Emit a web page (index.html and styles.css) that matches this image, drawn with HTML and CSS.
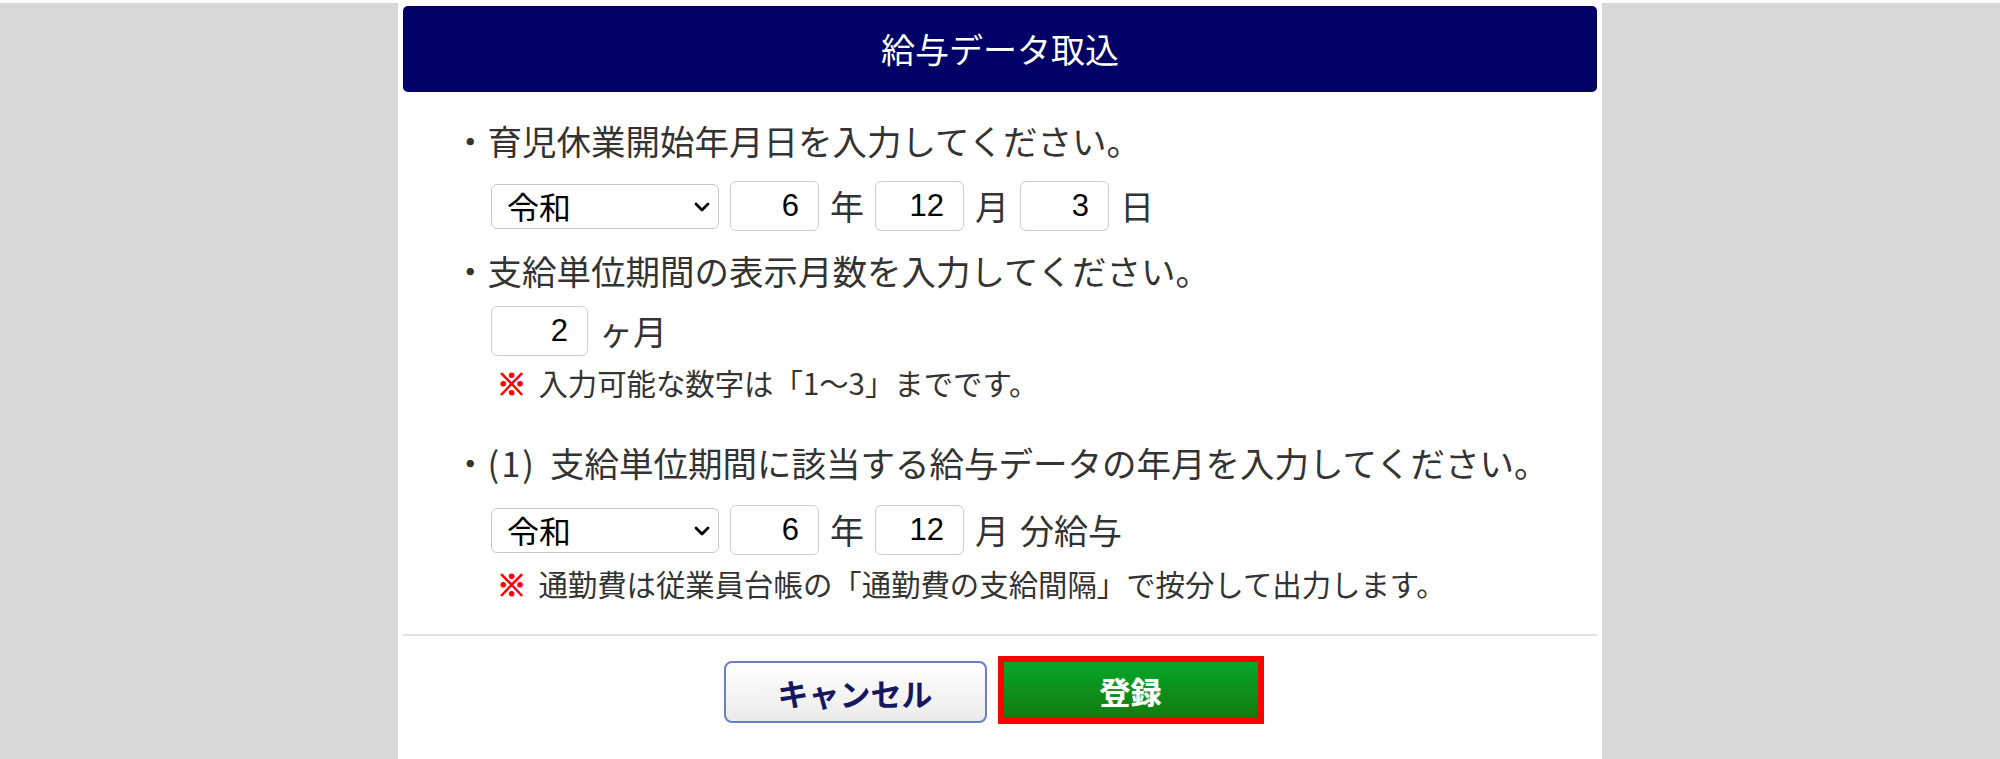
FILE: index.html
```html
<!DOCTYPE html>
<html lang="ja">
<head>
<meta charset="utf-8">
<title>給与データ取込</title>
<link rel="stylesheet" href="styles.css">
</head>
<body>
<div class="topline"></div>
<div class="panel">
  <div class="header">給与データ取込</div>
  <div class="content">
    <div class="q q1">・育児休業開始年月日を入力してください。</div>
    <div class="row row1">
      <span class="sel">
        <select><option>令和</option></select>
        <svg class="chev" width="16" height="10" viewBox="0 0 16 10"><path d="M2 2 L8 8 L14 2" fill="none" stroke="#000" stroke-width="2.8" stroke-linecap="round" stroke-linejoin="round"/></svg>
      </span>
      <input class="num" type="text" value="6">
      <span class="unit">年</span>
      <input class="num" type="text" value="12">
      <span class="unit">月</span>
      <input class="num" type="text" value="3">
      <span class="unit">日</span>
    </div>
    <div class="q q2">・支給単位期間の表示月数を入力してください。</div>
    <div class="row row2">
      <input class="num wide" type="text" value="2">
      <span class="unit">ヶ月</span>
    </div>
    <div class="note note1"><span class="mark">※</span><span>入力可能な数字は「1～3」までです。</span></div>
    <div class="q q3">・<span class="paren">(1)</span>支給単位期間に該当する給与データの年月を入力してください。</div>
    <div class="row row3">
      <span class="sel">
        <select><option>令和</option></select>
        <svg class="chev" width="16" height="10" viewBox="0 0 16 10"><path d="M2 2 L8 8 L14 2" fill="none" stroke="#000" stroke-width="2.8" stroke-linecap="round" stroke-linejoin="round"/></svg>
      </span>
      <input class="num" type="text" value="6">
      <span class="unit">年</span>
      <input class="num" type="text" value="12">
      <span class="unit">月</span>
      <span class="unit">分給与</span>
    </div>
    <div class="note note2"><span class="mark">※</span><span>通勤費は従業員台帳の「通勤費の支給間隔」で按分して出力します。</span></div>
  </div>
  <div class="divider"></div>
  <div class="actions">
    <button class="btn-cancel" type="button">キャンセル</button>
    <button class="btn-ok" type="button">登録</button>
  </div>
</div>
</body>
</html>
```

FILE: styles.css
```css
html, body {
  margin: 0;
  padding: 0;
}
body {
  background: #d9d9d9;
  font-family: "Noto Sans CJK JP", "Noto Sans", sans-serif;
  color: #333;
  overflow: hidden;
}
.topline {
  height: 3px;
  background: #fff;
}
.panel {
  width: 1204px;
  height: 756px;
  margin: 0 auto;
  background: #fff;
  padding: 3px 5px 0;
  box-sizing: border-box;
}
.header {
  height: 86px;
  background: #000066;
  border-radius: 5px;
  color: #fff;
  font-size: 34px;
  line-height: 1;
  display: flex;
  align-items: center;
  justify-content: center;
}
.content {
  padding-left: 50px;
}
.q {
  height: 50px;
  display: flex;
  align-items: center;
  font-size: 34.5px;
  line-height: 1;
  white-space: nowrap;
}
.paren {
  letter-spacing: 2px;
  margin-right: 14px;
}
.q1 { margin-top: 23px; }
.q2 { margin-top: 14px; }
.q3 { margin-top: 36px; }
.row {
  height: 50px;
  display: flex;
  align-items: center;
  gap: 11px;
  margin-left: 38px;
  font-size: 34px;
  line-height: 1;
}
.row1 { margin-top: 16px; }
.row2 { margin-top: 11px; }
.row3 { margin-top: 18px; }
.sel {
  position: relative;
  display: inline-flex;
}
.sel select {
  appearance: none;
  -webkit-appearance: none;
  width: 228px;
  height: 45px;
  box-sizing: border-box;
  border: 1.5px solid #c9c9c9;
  border-radius: 6px;
  background: #fff;
  color: #000;
  padding: 0 0 0 15px;
  font-family: "Noto Sans CJK JP", sans-serif;
  font-size: 32px;
  line-height: 1;
}
.chev {
  position: absolute;
  right: 9px;
  top: 18px;
  pointer-events: none;
}
.num {
  width: 89px;
  height: 50px;
  box-sizing: border-box;
  border: 1.5px solid #cfcfcf;
  border-radius: 6px;
  text-align: right;
  padding: 0 19px 0 0;
  font-family: "Liberation Sans", Arial, sans-serif;
  font-size: 31px;
  color: #000;
  background: #fff;
}
.num.wide {
  width: 97px;
}
.unit {
  white-space: nowrap;
}
.note {
  height: 36px;
  display: flex;
  align-items: center;
  margin-left: 44px;
  font-size: 29.4px;
  line-height: 1;
  white-space: nowrap;
}
.note1 { margin-top: 9px; }
.note2 { margin-top: 11px; }
.mark {
  color: #ff0000;
  font-weight: bold;
  -webkit-text-stroke: 1.2px #ff0000;
  margin-right: 12px;
}
.divider {
  height: 2px;
  background: #e2e2e2;
  margin-top: 32px;
}
.actions {
  display: flex;
  justify-content: center;
  align-items: flex-start;
  gap: 11px;
  margin-top: 20px;
  padding-right: 13px;
}
.btn-cancel {
  width: 263px;
  height: 62px;
  margin-top: 5px;
  box-sizing: border-box;
  border: 2px solid #6b7fc6;
  border-radius: 8px;
  background: linear-gradient(#ffffff, #ebebeb);
  color: #17175f;
  font-family: "Noto Sans CJK JP", sans-serif;
  font-weight: bold;
  font-size: 31px;
  line-height: 1;
  padding: 0;
}
.btn-ok {
  width: 266px;
  height: 68px;
  box-sizing: border-box;
  border: 6px solid #ff0000;
  border-radius: 0;
  background: linear-gradient(#06a729, #137b0f);
  color: #fff;
  font-family: "Noto Sans CJK JP", sans-serif;
  font-weight: bold;
  font-size: 31px;
  line-height: 1;
  padding: 0;
  text-shadow: 0 0 1px rgba(255, 255, 255, 0.6);
}
```
